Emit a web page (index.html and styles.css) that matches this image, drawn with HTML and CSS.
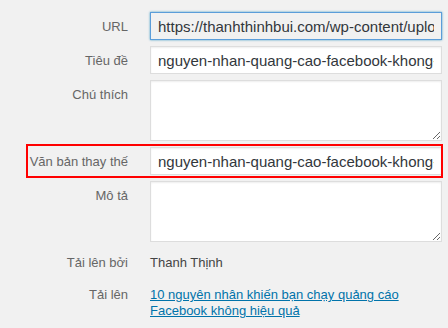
FILE: index.html
```html
<!DOCTYPE html>
<html lang="vi">
<head>
    <meta charset="UTF-8">
    <meta name="viewport" content="width=device-width, initial-scale=1.0">
    <title>Chi tiết tệp đính kèm</title>
    <link rel="stylesheet" href="styles.css">
</head>
<body>
    <div class="settings">
        <label class="setting">
            <span class="name">URL</span>
            <input type="text" class="url" value="https://thanhthinhbui.com/wp-content/uploads/2019/10/nguyen-nhan-quang-cao-facebook-khong-hieu-qua.jpg" readonly>
        </label>
        <label class="setting">
            <span class="name">Tiêu đề</span>
            <input type="text" value="nguyen-nhan-quang-cao-facebook-khong-hieu-qua">
        </label>
        <label class="setting">
            <span class="name">Chú thích</span>
            <textarea></textarea>
        </label>
        <label class="setting highlight">
            <span class="name">Văn bản thay thế</span>
            <input type="text" value="nguyen-nhan-quang-cao-facebook-khong-hieu-qua">
        </label>
        <label class="setting">
            <span class="name">Mô tả</span>
            <textarea></textarea>
        </label>
        <div class="setting info first">
            <span class="name">Tải lên bởi</span>
            <span class="value">Thanh Thịnh</span>
        </div>
        <div class="setting info">
            <span class="name">Tải lên</span>
            <span class="value"><a href="#">10 nguyên nhân khiến bạn chạy quảng cáo Facebook không hiệu quả</a></span>
        </div>
    </div>
</body>
</html>
```

FILE: styles.css
```css
body {
    margin: 0;
    background-color: #f1f1f1;
    font-family: "Liberation Sans", Arial, sans-serif;
    font-size: 13px;
    color: #444;
}

.settings {
    padding-top: 12px;
}

.setting {
    display: flex;
    align-items: flex-start;
    margin-bottom: 6px;
    position: relative;
}

.setting .name {
    width: 128px;
    margin-right: 22px;
    text-align: right;
    color: #666;
    padding-top: 7px;
    line-height: 16px;
    flex-shrink: 0;
}

.setting input,
.setting textarea {
    box-sizing: border-box;
    width: 292px;
    margin: 0;
    border: 1px solid #ddd;
    box-shadow: inset 0 1px 2px rgba(0, 0, 0, 0.07);
    background-color: #fff;
    color: #32373c;
    font-family: "Liberation Sans", Arial, sans-serif;
    font-size: 15px;
}

.setting input {
    height: 28px;
    padding: 3px 7px;
}

.setting textarea {
    height: 61px;
    padding: 2px 6px;
    resize: vertical;
}

.setting input.url {
    background-color: #f1f1f1;
    border-color: #5b9dd9;
    box-shadow: 0 0 2px rgba(30, 140, 190, 0.8);
}

.highlight::before {
    content: "";
    position: absolute;
    left: 26px;
    right: 5px;
    top: -3px;
    bottom: -3px;
    border: 2px solid #f00;
    pointer-events: none;
}

.info {
    margin-bottom: 9px;
}

.info.first {
    margin-top: 3px;
}

.info .value {
    width: 292px;
    padding-top: 7px;
    line-height: 16px;
    color: #444;
}

.info .value a {
    color: #0073aa;
}
```
